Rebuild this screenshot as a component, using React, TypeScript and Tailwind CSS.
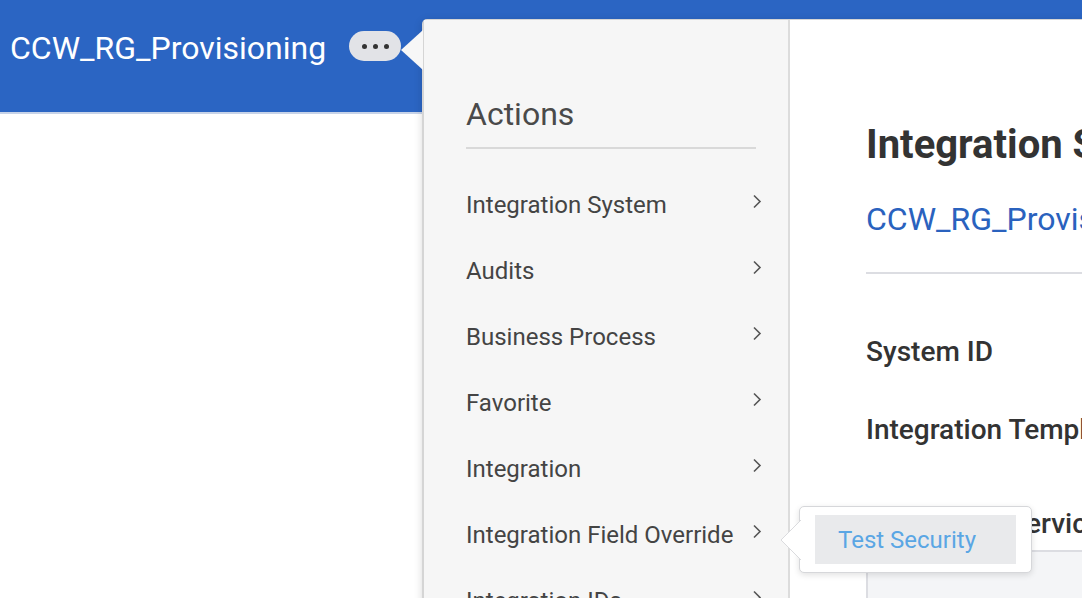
import React from 'react';

const ACTIONS = [
  'Integration System',
  'Audits',
  'Business Process',
  'Favorite',
  'Integration',
  'Integration Field Override',
  'Integration IDs',
];

function Chevron() {
  return (
    <svg width="10" height="15" viewBox="0 0 10 15" className="mb-[8px] shrink-0">
      <polyline points="2,1.5 8,7.5 2,13.5" fill="none" stroke="#555" strokeWidth="1.6" />
    </svg>
  );
}

export default function App() {
  return (
    <div
      className="relative w-[1082px] h-[598px] overflow-hidden bg-white"
      style={{ fontFamily: 'Roboto, "Liberation Sans", sans-serif' }}
    >
      {/* Page header */}
      <div className="h-[114px] bg-[#2b65c3] border-b-2 border-[#c7d3e8] flex items-start pt-[28px] pl-[10px]">
        <h1 className="text-[32px] leading-[40px] text-white">CCW_RG_Provisioning</h1>
        <button className="ml-[23px] mt-[3px] w-[52px] h-[30px] rounded-full bg-[#e2e3e7] flex items-center justify-center gap-[6px]">
          <span className="w-[5px] h-[5px] rounded-full bg-[#333]" />
          <span className="w-[5px] h-[5px] rounded-full bg-[#333]" />
          <span className="w-[5px] h-[5px] rounded-full bg-[#333]" />
        </button>
      </div>

      {/* Related actions popup */}
      <div className="absolute left-[422px] top-[19px] w-[720px] h-[640px] flex rounded-tl-[5px] border-l-2 border-t border-[#d5d5d5] shadow-[0_2px_8px_rgba(0,0,0,0.15)]">
        <svg width="22" height="40" viewBox="0 0 22 40" className="absolute left-[-23px] top-[10px]">
          <polygon points="22,0 0,20 22,40" fill="#f7f7f7" />
        </svg>

        <div className="w-[366px] shrink-0 bg-[#f6f6f6] border-r-2 border-[#dcdcdc] pl-[42px] pr-[26px] pt-[76px]">
          <div className="text-[32px] leading-[36px] text-[#4a4a4a] pb-[15px] border-b-2 border-[#d9d9d9] mr-[6px]">
            Actions
          </div>
          <div className="mt-[23px]">
            {ACTIONS.map((a) => (
              <div key={a} className="h-[66px] flex items-center justify-between">
                <span className="text-[24px] text-[#444] whitespace-nowrap">{a}</span>
                <Chevron />
              </div>
            ))}
          </div>
        </div>

        <div className="flex-1 bg-white pl-[76px] pt-[102px]">
          <h2 className="text-[40px] leading-[46px] font-bold text-[#333] whitespace-nowrap">Integration System</h2>
          <div className="mt-[33px] pb-[35px] border-b-2 border-[#dcdde2] text-[32px] leading-[36px] text-[#2a62be] whitespace-nowrap">
            CCW_RG_Provisioning
          </div>
          <div className="mt-[62px] text-[28px] leading-[32px] font-medium text-[#333]">System ID</div>
          <div className="mt-[46px] text-[28px] leading-[32px] font-medium text-[#333] whitespace-nowrap">Integration Template</div>
          <div className="mt-[62px] text-[28px] leading-[32px] font-medium text-[#333] whitespace-nowrap">Integration Service</div>
          <div className="mt-[10px] h-[120px] bg-[#f4f5f7] border-t-2 border-l-2 border-[#dcdde2]" />
        </div>
      </div>

      {/* Submenu */}
      <div className="absolute left-[799px] top-[506px] w-[233px] h-[67px] bg-white border border-[#d6d7da] rounded-[5px] shadow-[0_2px_6px_rgba(0,0,0,0.12)] px-[15px] pt-[8px]">
        <svg width="21" height="40" viewBox="0 0 21 40" className="absolute left-[-20px] top-[13px]">
          <polygon points="21,0 1,20 21,40" fill="#fff" />
          <polyline points="21,0 1,20 21,40" fill="none" stroke="#dadbde" strokeWidth="1" />
        </svg>
        <div className="h-[49px] bg-[#e9eaec] flex items-center pl-[23px] text-[24px] text-[#5aa6e4] whitespace-nowrap">
          Test Security
        </div>
      </div>
    </div>
  );
}
